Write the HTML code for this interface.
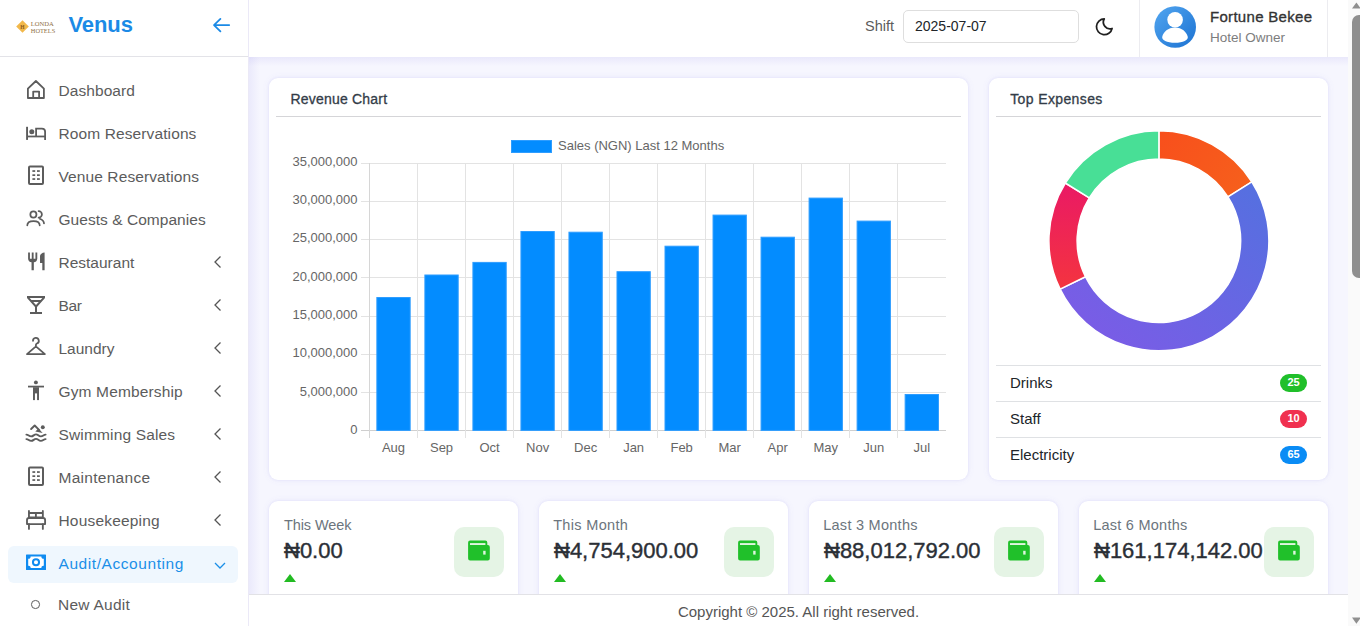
<!DOCTYPE html>
<html><head><meta charset="utf-8">
<style>
*{box-sizing:border-box;margin:0;padding:0}
html,body{width:1360px;height:626px;overflow:hidden}
body{position:relative;background:#f6f6fe;font-family:"Liberation Sans",sans-serif;color:#333}
.a{position:absolute;white-space:nowrap;line-height:1}
svg.a{overflow:visible}
.card{position:absolute;background:#fff;border-radius:9px;box-shadow:0 0 3px rgba(95,85,220,.13),0 0 9px rgba(110,100,230,.06)}
</style></head>
<body>

<div class="a" style="left:0;top:0;width:248px;height:626px;background:#fff"></div>
<svg class="a" style="left:15px;top:19px" width="42" height="16" viewBox="0 0 42 16">
<path d="M7.5 1.2 L13.8 7.5 L7.5 13.8 L1.2 7.5Z" fill="#f2b84b"/>
<text x="7.5" y="9.8" font-size="5.5" text-anchor="middle" fill="#8a5a1a" font-family="Liberation Serif" font-weight="bold">H</text>
<text x="15.8" y="7.4" font-size="6.8" fill="#8f6f45" font-family="Liberation Serif" textLength="23" lengthAdjust="spacingAndGlyphs">LONDA</text>
<text x="15.8" y="13.6" font-size="6.8" fill="#8f6f45" font-family="Liberation Serif" textLength="24.4" lengthAdjust="spacingAndGlyphs">HOTELS</text>
</svg>
<div class="a" style="left:68.5px;top:14.18px;font-size:22px;font-weight:bold;color:#1b8ae6;letter-spacing:-0.1px">Venus</div>
<svg class="a" style="left:210px;top:15px" width="24" height="22" viewBox="0 0 24 22"><path d="M4 10.1H19.2M4 10.1L10.4 3.9M4 10.1L10.4 16.3" stroke="#1b8ae6" stroke-width="1.8" fill="none" stroke-linecap="round" stroke-linejoin="round"/></svg>
<div class="a" style="left:0;top:56px;width:248px;height:1px;background:#e3e3e8"></div>
<svg class="a" style="left:24px;top:77.9px" width="24" height="24" viewBox="0 0 24 24"><path d="M3.9 20V10.6L11.9 3L19.9 10.6V20Z M9.2 20V13.6H15.1V20" fill="none" stroke="#5c5c5c" stroke-width="1.8" stroke-linejoin="round"/></svg>
<div class="a" style="left:58.5px;top:83.08px;font-size:15.5px;color:#5c5c5c;letter-spacing:0.07px">Dashboard</div>
<svg class="a" style="left:24px;top:120.9px" width="24" height="24" viewBox="0 0 24 24"><g fill="#5c5c5c"><rect x="2.1" y="5.8" width="1.9" height="13.1"/><circle cx="7.8" cy="10.8" r="2.5"/><rect x="4" y="14.6" width="17" height="1.75"/></g><path d="M12.1 15V7.6H17.9A3.2 3.2 0 0 1 21.1 10.8V18.9" fill="none" stroke="#5c5c5c" stroke-width="1.8"/></svg>
<div class="a" style="left:58.5px;top:126.08px;font-size:15.5px;color:#5c5c5c;letter-spacing:0.11px">Room Reservations</div>
<svg class="a" style="left:24px;top:163.9px" width="24" height="24" viewBox="0 0 24 24"><rect x="5" y="2.4" width="14" height="17.6" rx="1" fill="none" stroke="#5c5c5c" stroke-width="2"/><g fill="#5c5c5c"><rect x="8.4" y="6.2" width="2.8" height="1.7"/><rect x="13" y="6.2" width="2.8" height="1.7"/><rect x="8.4" y="10.3" width="2.8" height="1.7"/><rect x="13" y="10.3" width="2.8" height="1.7"/><rect x="8.4" y="14.2" width="2.8" height="1.7"/><rect x="13" y="14.2" width="2.8" height="1.7"/></g></svg>
<div class="a" style="left:58.5px;top:169.08px;font-size:15.5px;color:#5c5c5c;letter-spacing:0.1px">Venue Reservations</div>
<svg class="a" style="left:24px;top:206.9px" width="24" height="24" viewBox="0 0 24 24"><g fill="none" stroke="#5c5c5c" stroke-width="1.75" stroke-linecap="round"><circle cx="9.4" cy="7.5" r="3.05"/><path d="M3.3 18.3C3.3 15.6 6 14 9.5 14C13 14 15.7 15.6 15.7 18.3"/><path d="M14.6 4.1A3.3 3.3 0 0 1 14.6 10.7"/><path d="M15.8 11.8C18.2 12.7 19.9 14.3 20 16.4"/></g></svg>
<div class="a" style="left:58.5px;top:212.08px;font-size:15.5px;color:#5c5c5c;letter-spacing:0.04px">Guests &amp; Companies</div>
<svg class="a" style="left:24px;top:249.9px" width="24" height="24" viewBox="0 0 24 24"><path fill="#5c5c5c" transform="translate(4.1 2.5) scale(0.917 0.885) translate(-3 -2)" d="M11 9H9V2H7v7H5V2H3v7c0 2.12 1.66 3.84 3.75 3.97V22h2.5v-9.03C11.34 12.84 13 11.12 13 9V2h-2v7zm5-3v8h2.5v8H21V2c-2.76 0-5 2.24-5 4z"/></svg>
<div class="a" style="left:58.5px;top:255.08px;font-size:15.5px;color:#5c5c5c;letter-spacing:0px">Restaurant</div>
<svg class="a" style="left:212px;top:254.9px" width="10" height="14" viewBox="0 0 10 14"><path d="M8.5 1.5L3 7L8.5 12.5" fill="none" stroke="#555" stroke-width="1.3"/></svg>
<svg class="a" style="left:24px;top:292.9px" width="24" height="24" viewBox="0 0 24 24"><path fill="#5c5c5c" d="M14.77 9L12 12.11 9.23 9h5.54M21 3H3v2l8 9v5H6v2h12v-2h-5v-5l8-9V3zM7.43 7L5.66 5h12.69l-1.78 2H7.43z"/></svg>
<div class="a" style="left:58.5px;top:298.08px;font-size:15.5px;color:#5c5c5c;letter-spacing:-0.3px">Bar</div>
<svg class="a" style="left:212px;top:297.9px" width="10" height="14" viewBox="0 0 10 14"><path d="M8.5 1.5L3 7L8.5 12.5" fill="none" stroke="#555" stroke-width="1.3"/></svg>
<svg class="a" style="left:24px;top:335.9px" width="24" height="24" viewBox="0 0 24 24"><path d="M9 4.8A2.9 2.9 0 1 1 12.9 7.5C12.2 7.9 11.9 8.4 11.9 9.1V10.4L3 18.1H20.9L11.9 10.4" fill="none" stroke="#5c5c5c" stroke-width="1.8" stroke-linecap="round" stroke-linejoin="round"/></svg>
<div class="a" style="left:58.5px;top:341.08px;font-size:15.5px;color:#5c5c5c;letter-spacing:0px">Laundry</div>
<svg class="a" style="left:212px;top:340.9px" width="10" height="14" viewBox="0 0 10 14"><path d="M8.5 1.5L3 7L8.5 12.5" fill="none" stroke="#555" stroke-width="1.3"/></svg>
<svg class="a" style="left:24px;top:378.9px" width="24" height="24" viewBox="0 0 24 24"><g fill="#5c5c5c"><circle cx="11.9" cy="3.4" r="1.95"/><rect x="4" y="6.7" width="16" height="1.75"/><rect x="9" y="8.2" width="6" height="6.2"/><rect x="9" y="13" width="1.95" height="8.1"/><rect x="13.05" y="13" width="1.95" height="8.1"/></g></svg>
<div class="a" style="left:58.5px;top:384.08px;font-size:15.5px;color:#5c5c5c;letter-spacing:0.14px">Gym Membership</div>
<svg class="a" style="left:212px;top:383.9px" width="10" height="14" viewBox="0 0 10 14"><path d="M8.5 1.5L3 7L8.5 12.5" fill="none" stroke="#555" stroke-width="1.3"/></svg>
<svg class="a" style="left:24px;top:421.9px" width="24" height="24" viewBox="0 0 24 24"><g fill="none" stroke="#5c5c5c" stroke-width="1.9" stroke-linecap="round"><path d="M2.4 12.6C4.5 12.6 5 14.4 7.2 14.4S9.9 12.4 12 12.4S14.5 14.4 16.8 14.4S19.5 12.6 21.6 12.6"/><path d="M2.4 17.1C4.5 17.1 5 18.9 7.2 18.9S9.9 16.9 12 16.9S14.5 18.9 16.8 18.9S19.5 17.1 21.6 17.1"/><path d="M7.1 7L10.7 3.5L15.3 8.1" stroke-linejoin="round"/></g><path fill="#5c5c5c" d="M11.3 9.5L14.4 6.4L18.7 10.9Z"/><circle cx="18.8" cy="5.3" r="1.95" fill="#5c5c5c"/></svg>
<div class="a" style="left:58.5px;top:427.08px;font-size:15.5px;color:#5c5c5c;letter-spacing:0.15px">Swimming Sales</div>
<svg class="a" style="left:212px;top:426.9px" width="10" height="14" viewBox="0 0 10 14"><path d="M8.5 1.5L3 7L8.5 12.5" fill="none" stroke="#555" stroke-width="1.3"/></svg>
<svg class="a" style="left:24px;top:464.9px" width="24" height="24" viewBox="0 0 24 24"><rect x="5" y="2.4" width="14" height="17.6" rx="1" fill="none" stroke="#5c5c5c" stroke-width="2"/><g fill="#5c5c5c"><rect x="8.4" y="6.2" width="2.8" height="1.7"/><rect x="13" y="6.2" width="2.8" height="1.7"/><rect x="8.4" y="10.3" width="2.8" height="1.7"/><rect x="13" y="10.3" width="2.8" height="1.7"/><rect x="8.4" y="14.2" width="2.8" height="1.7"/><rect x="13" y="14.2" width="2.8" height="1.7"/></g></svg>
<div class="a" style="left:58.5px;top:470.08px;font-size:15.5px;color:#5c5c5c;letter-spacing:0.28px">Maintenance</div>
<svg class="a" style="left:212px;top:469.9px" width="10" height="14" viewBox="0 0 10 14"><path d="M8.5 1.5L3 7L8.5 12.5" fill="none" stroke="#555" stroke-width="1.3"/></svg>
<svg class="a" style="left:24px;top:507.9px" width="24" height="24" viewBox="0 0 24 24"><g fill="none" stroke="#5c5c5c" stroke-width="1.85" stroke-linecap="round" stroke-linejoin="round"><path d="M4.95 2.9V10M18.85 2.9V10M4.95 4.95H18.85M4.95 9.5H18.85M11.9 4.95V9.5"/><path d="M3 16.1V12A2 2 0 0 1 5 10H19.1A2 2 0 0 1 21.1 12V16.1Z"/><path d="M4.95 16.1V20.9M18.85 16.1V20.9"/></g></svg>
<div class="a" style="left:58.5px;top:513.08px;font-size:15.5px;color:#5c5c5c;letter-spacing:0.18px">Housekeeping</div>
<svg class="a" style="left:212px;top:512.9px" width="10" height="14" viewBox="0 0 10 14"><path d="M8.5 1.5L3 7L8.5 12.5" fill="none" stroke="#555" stroke-width="1.3"/></svg>
<div class="a" style="left:8px;top:545.5px;width:230px;height:37px;border-radius:6px;background:#eff7fe"></div>
<svg class="a" style="left:24px;top:550.4px" width="24" height="24" viewBox="0 0 24 24"><rect x="2" y="4.5" width="20" height="15.5" rx="0.6" fill="#0f8bf0"/><path fill="#fff" d="M6.6 6.5H17.4a2 2 0 0 0 2.4 2.3V15.7a2 2 0 0 0-2.4 2.3H6.6a2 2 0 0 0-2.4-2.3V8.8a2 2 0 0 0 2.4-2.3Z"/><circle cx="12" cy="12.25" r="3.05" fill="none" stroke="#0f8bf0" stroke-width="2"/></svg>
<div class="a" style="left:58.5px;top:556.08px;font-size:15.5px;color:#1a8fe8;letter-spacing:0.57px">Audit/Accounting</div>
<svg class="a" style="left:211.5px;top:560.2px" width="16" height="12" viewBox="0 0 16 12"><path d="M3 3L8 8L13 3" fill="none" stroke="#1a8fe8" stroke-width="1.3"/></svg>
<div class="a" style="left:31.3px;top:600.2px;width:8.5px;height:8.5px;border-radius:50%;border:1.6px solid #5c5c5c"></div>
<div class="a" style="left:58px;top:596.88px;font-size:15.5px;color:#5c5c5c;letter-spacing:0.25px">New Audit</div>
<div class="a" style="left:249px;top:0;width:1099px;height:57px;background:#fff"></div>
<div class="a" style="left:249px;top:57px;width:1099px;height:9px;background:linear-gradient(rgba(100,90,220,.085),rgba(100,90,220,0))"></div>
<div class="a" style="left:248px;top:57px;width:12px;height:537px;background:linear-gradient(90deg,rgba(100,90,220,.085),rgba(100,90,220,0))"></div>
<div class="a" style="left:248px;top:0;width:1px;height:626px;background:#ebe9f7"></div>
<div class="a" style="left:865px;top:18.53px;font-size:14.5px;color:#5c5c5c;">Shift</div>
<div class="a" style="left:903px;top:10px;width:176px;height:33px;border:1px solid #dedede;border-radius:5px;background:#fff"></div>
<div class="a" style="left:915px;top:19.35px;font-size:14px;color:#212529;">2025-07-07</div>
<svg class="a" style="left:1092.5px;top:16px" width="22" height="22" viewBox="0 0 24 24"><path d="M12.3 3.2a7.2 7.2 0 0 0 8.5 10.4A8.6 8.6 0 1 1 12.3 3.2Z" fill="none" stroke="#1f1f1f" stroke-width="1.9" stroke-linejoin="round"/></svg>
<div class="a" style="left:1139px;top:0;width:1px;height:57px;background:#ececf0"></div>
<div class="a" style="left:1327px;top:0;width:1px;height:57px;background:#ececf0"></div>
<svg class="a" style="left:1154px;top:6px" width="42" height="42" viewBox="0 0 42 42"><defs><linearGradient id="av" x1="0" y1="0" x2="1" y2="1"><stop offset="0" stop-color="#52a6f0"/><stop offset="1" stop-color="#1c72d2"/></linearGradient></defs>
<circle cx="21.2" cy="21" r="20.8" fill="url(#av)"/><circle cx="21.1" cy="13.8" r="7.8" fill="#fff"/><path d="M8.3 30.5C9.5 26 14 21.8 21 21.6C28 21.8 32.5 26 33.7 30.5C34.8 34 29 36.8 21 36.8C13 36.8 7.2 34 8.3 30.5Z" fill="#fff"/></svg>
<div class="a" style="left:1210px;top:9.10px;font-size:15px;-webkit-text-stroke:0.33px #333;color:#333;letter-spacing:0.3px">Fortune Bekee</div>
<div class="a" style="left:1210px;top:30.97px;font-size:13.5px;color:#7d7d7d;">Hotel Owner</div>
<div class="card" style="left:269px;top:78px;width:699px;height:402px"></div>
<div class="a" style="left:290.5px;top:91.85px;font-size:14px;-webkit-text-stroke:0.31px #333c48;color:#333c48;letter-spacing:0.2px">Revenue Chart</div>
<div class="a" style="left:276px;top:116px;width:685px;height:1px;background:#d5d5d8"></div>
<svg class="a" style="left:0;top:0" width="1360" height="626" viewBox="0 0 1360 626">
<line x1="361" y1="430.5" x2="946" y2="430.5" stroke="#cfcfcf" stroke-width="1"/>
<line x1="361" y1="392.5" x2="946" y2="392.5" stroke="#e3e3e3" stroke-width="1"/>
<line x1="361" y1="354.5" x2="946" y2="354.5" stroke="#e3e3e3" stroke-width="1"/>
<line x1="361" y1="316.5" x2="946" y2="316.5" stroke="#e3e3e3" stroke-width="1"/>
<line x1="361" y1="277.5" x2="946" y2="277.5" stroke="#e3e3e3" stroke-width="1"/>
<line x1="361" y1="239.5" x2="946" y2="239.5" stroke="#e3e3e3" stroke-width="1"/>
<line x1="361" y1="201.5" x2="946" y2="201.5" stroke="#e3e3e3" stroke-width="1"/>
<line x1="361" y1="163.5" x2="946" y2="163.5" stroke="#e3e3e3" stroke-width="1"/>
<line x1="369.5" y1="163" x2="369.5" y2="438" stroke="#d6d6d6" stroke-width="1"/>
<line x1="417.5" y1="163" x2="417.5" y2="438" stroke="#e3e3e3" stroke-width="1"/>
<line x1="465.5" y1="163" x2="465.5" y2="438" stroke="#e3e3e3" stroke-width="1"/>
<line x1="513.5" y1="163" x2="513.5" y2="438" stroke="#e3e3e3" stroke-width="1"/>
<line x1="561.5" y1="163" x2="561.5" y2="438" stroke="#e3e3e3" stroke-width="1"/>
<line x1="609.5" y1="163" x2="609.5" y2="438" stroke="#e3e3e3" stroke-width="1"/>
<line x1="657.5" y1="163" x2="657.5" y2="438" stroke="#e3e3e3" stroke-width="1"/>
<line x1="705.5" y1="163" x2="705.5" y2="438" stroke="#e3e3e3" stroke-width="1"/>
<line x1="753.5" y1="163" x2="753.5" y2="438" stroke="#e3e3e3" stroke-width="1"/>
<line x1="801.5" y1="163" x2="801.5" y2="438" stroke="#e3e3e3" stroke-width="1"/>
<line x1="849.5" y1="163" x2="849.5" y2="438" stroke="#e3e3e3" stroke-width="1"/>
<line x1="897.5" y1="163" x2="897.5" y2="438" stroke="#e3e3e3" stroke-width="1"/>
<line x1="430.5" y1="0" x2="0" y2="0" stroke="none"/>
<rect x="376.86" y="297.50" width="33.30" height="132.90" fill="#038cff" stroke="#2e9dff" stroke-width="1"/>
<text x="393.51" y="452" font-size="13" fill="#666" text-anchor="middle" font-family="Liberation Sans">Aug</text>
<rect x="424.89" y="275.00" width="33.30" height="155.40" fill="#038cff" stroke="#2e9dff" stroke-width="1"/>
<text x="441.54" y="452" font-size="13" fill="#666" text-anchor="middle" font-family="Liberation Sans">Sep</text>
<rect x="472.91" y="262.40" width="33.30" height="168.00" fill="#038cff" stroke="#2e9dff" stroke-width="1"/>
<text x="489.56" y="452" font-size="13" fill="#666" text-anchor="middle" font-family="Liberation Sans">Oct</text>
<rect x="520.94" y="231.50" width="33.30" height="198.90" fill="#038cff" stroke="#2e9dff" stroke-width="1"/>
<text x="537.59" y="452" font-size="13" fill="#666" text-anchor="middle" font-family="Liberation Sans">Nov</text>
<rect x="568.96" y="232.20" width="33.30" height="198.20" fill="#038cff" stroke="#2e9dff" stroke-width="1"/>
<text x="585.61" y="452" font-size="13" fill="#666" text-anchor="middle" font-family="Liberation Sans">Dec</text>
<rect x="616.99" y="271.70" width="33.30" height="158.70" fill="#038cff" stroke="#2e9dff" stroke-width="1"/>
<text x="633.64" y="452" font-size="13" fill="#666" text-anchor="middle" font-family="Liberation Sans">Jan</text>
<rect x="665.01" y="246.20" width="33.30" height="184.20" fill="#038cff" stroke="#2e9dff" stroke-width="1"/>
<text x="681.66" y="452" font-size="13" fill="#666" text-anchor="middle" font-family="Liberation Sans">Feb</text>
<rect x="713.04" y="215.10" width="33.30" height="215.30" fill="#038cff" stroke="#2e9dff" stroke-width="1"/>
<text x="729.69" y="452" font-size="13" fill="#666" text-anchor="middle" font-family="Liberation Sans">Mar</text>
<rect x="761.06" y="237.20" width="33.30" height="193.20" fill="#038cff" stroke="#2e9dff" stroke-width="1"/>
<text x="777.71" y="452" font-size="13" fill="#666" text-anchor="middle" font-family="Liberation Sans">Apr</text>
<rect x="809.09" y="198.10" width="33.30" height="232.30" fill="#038cff" stroke="#2e9dff" stroke-width="1"/>
<text x="825.74" y="452" font-size="13" fill="#666" text-anchor="middle" font-family="Liberation Sans">May</text>
<rect x="857.11" y="221.10" width="33.30" height="209.30" fill="#038cff" stroke="#2e9dff" stroke-width="1"/>
<text x="873.76" y="452" font-size="13" fill="#666" text-anchor="middle" font-family="Liberation Sans">Jun</text>
<rect x="905.14" y="394.50" width="33.30" height="35.90" fill="#038cff" stroke="#2e9dff" stroke-width="1"/>
<text x="921.79" y="452" font-size="13" fill="#666" text-anchor="middle" font-family="Liberation Sans">Jul</text>
<text x="357.5" y="434.10" font-size="13" fill="#666" text-anchor="end" font-family="Liberation Sans">0</text>
<text x="357.5" y="395.73" font-size="13" fill="#666" text-anchor="end" font-family="Liberation Sans">5,000,000</text>
<text x="357.5" y="357.36" font-size="13" fill="#666" text-anchor="end" font-family="Liberation Sans">10,000,000</text>
<text x="357.5" y="318.99" font-size="13" fill="#666" text-anchor="end" font-family="Liberation Sans">15,000,000</text>
<text x="357.5" y="280.61" font-size="13" fill="#666" text-anchor="end" font-family="Liberation Sans">20,000,000</text>
<text x="357.5" y="242.24" font-size="13" fill="#666" text-anchor="end" font-family="Liberation Sans">25,000,000</text>
<text x="357.5" y="203.87" font-size="13" fill="#666" text-anchor="end" font-family="Liberation Sans">30,000,000</text>
<text x="357.5" y="165.50" font-size="13" fill="#666" text-anchor="end" font-family="Liberation Sans">35,000,000</text>
<rect x="511.5" y="140.5" width="40" height="12" fill="#038cff" stroke="#2e9dff" stroke-width="1"/>
<text x="558" y="150" font-size="13" fill="#666" font-family="Liberation Sans">Sales (NGN) Last 12 Months</text>
</svg>
<div class="card" style="left:989px;top:78px;width:339px;height:402px"></div>
<div class="a" style="left:1010.2px;top:91.85px;font-size:14px;-webkit-text-stroke:0.31px #333c48;color:#333c48;letter-spacing:0.38px">Top Expenses</div>
<div class="a" style="left:996px;top:116px;width:325px;height:1px;background:#d5d5d8"></div>
<svg class="a" style="left:0;top:0" width="1360" height="626" viewBox="0 0 1360 626"><defs>
<linearGradient id="gp" gradientUnits="userSpaceOnUse" x1="1250" y1="180" x2="1110" y2="350"><stop offset="0" stop-color="#5570e0"/><stop offset="1" stop-color="#7a5ce6"/></linearGradient>
<linearGradient id="gr" gradientUnits="userSpaceOnUse" x1="1060" y1="185" x2="1060" y2="290"><stop offset="0" stop-color="#ea1a64"/><stop offset="1" stop-color="#f4343f"/></linearGradient>
<linearGradient id="go" gradientUnits="userSpaceOnUse" x1="1160" y1="130" x2="1250" y2="190"><stop offset="0" stop-color="#f84f1c"/><stop offset="1" stop-color="#f6601c"/></linearGradient>
</defs>
<path d="M1158.90 130.80A110 110 0 0 1 1251.78 181.86L1227.97 196.97A81.8 81.8 0 0 0 1158.90 159.00Z" fill="url(#go)" stroke="#fff" stroke-width="1.5" stroke-linejoin="round"/>
<path d="M1251.78 181.86A110 110 0 1 1 1060.12 289.19L1085.44 276.79A81.8 81.8 0 1 0 1227.97 196.97Z" fill="url(#gp)" stroke="#fff" stroke-width="1.5" stroke-linejoin="round"/>
<path d="M1060.12 289.19A110 110 0 0 1 1065.31 183.00L1089.30 197.82A81.8 81.8 0 0 0 1085.44 276.79Z" fill="url(#gr)" stroke="#fff" stroke-width="1.5" stroke-linejoin="round"/>
<path d="M1065.31 183.00A110 110 0 0 1 1158.90 130.80L1158.90 159.00A81.8 81.8 0 0 0 1089.30 197.82Z" fill="#48df96" stroke="#fff" stroke-width="1.5" stroke-linejoin="round"/>
</svg>
<div class="a" style="left:996px;top:365.0px;width:325px;height:1px;background:#dfe1e4"></div>
<div class="a" style="left:996px;top:401.0px;width:325px;height:1px;background:#dfe1e4"></div>
<div class="a" style="left:996px;top:437.0px;width:325px;height:1px;background:#dfe1e4"></div>
<div class="a" style="left:1010px;top:375.30px;font-size:15px;color:#212529;">Drinks</div>
<div class="a" style="left:1280px;top:373.8px;width:27px;height:18px;border-radius:9px;background:#20bf2a;color:#fff;font-size:11px;font-weight:bold;text-align:center;line-height:16.5px">25</div>
<div class="a" style="left:1010px;top:411.30px;font-size:15px;color:#212529;">Staff</div>
<div class="a" style="left:1280px;top:409.8px;width:27px;height:18px;border-radius:9px;background:#f0304f;color:#fff;font-size:11px;font-weight:bold;text-align:center;line-height:16.5px">10</div>
<div class="a" style="left:1010px;top:447.30px;font-size:15px;color:#212529;">Electricity</div>
<div class="a" style="left:1280px;top:445.8px;width:27px;height:18px;border-radius:9px;background:#0a8cf5;color:#fff;font-size:11px;font-weight:bold;text-align:center;line-height:16.5px">65</div>
<div class="card" style="left:269px;top:501px;width:249px;height:140px"></div>
<div class="a" style="left:284px;top:518.13px;font-size:14.5px;color:#6c757d;letter-spacing:-0.1px">This Week</div>
<div class="a" style="left:284px;top:540.38px;font-size:22px;-webkit-text-stroke:0.40px #2b2f36;color:#2b2f36;">&#8358;0.00</div>
<div class="a" style="left:284px;top:574px;width:0;height:0;border-left:6px solid transparent;border-right:6px solid transparent;border-bottom:8px solid #22bb22"></div>
<div class="a" style="left:454px;top:527px;width:50px;height:50px;border-radius:10px;background:#e5f4e5"></div>
<svg class="a" style="left:468px;top:540px" width="22" height="21" viewBox="0 0 22 21"><path d="M0.1 2.6Q0.1 0.6 2.1 0.6H17.3Q19.3 0.6 19.3 2.6V5H19.8Q21.8 5 21.8 7V18.4Q21.8 20.4 19.8 20.4H2.1Q0.1 20.4 0.1 18.4Z" fill="#20c02a"/><rect x="2" y="3.1" width="15.4" height="1.9" fill="#dff5df"/><rect x="15.2" y="10.8" width="2.4" height="3.8" fill="#dff5df"/></svg>
<div class="card" style="left:539px;top:501px;width:249px;height:140px"></div>
<div class="a" style="left:553.2px;top:518.13px;font-size:14.5px;color:#6c757d;letter-spacing:0.33px">This Month</div>
<div class="a" style="left:554px;top:540.38px;font-size:22px;-webkit-text-stroke:0.40px #2b2f36;color:#2b2f36;">&#8358;4,754,900.00</div>
<div class="a" style="left:554px;top:574px;width:0;height:0;border-left:6px solid transparent;border-right:6px solid transparent;border-bottom:8px solid #22bb22"></div>
<div class="a" style="left:724px;top:527px;width:50px;height:50px;border-radius:10px;background:#e5f4e5"></div>
<svg class="a" style="left:738px;top:540px" width="22" height="21" viewBox="0 0 22 21"><path d="M0.1 2.6Q0.1 0.6 2.1 0.6H17.3Q19.3 0.6 19.3 2.6V5H19.8Q21.8 5 21.8 7V18.4Q21.8 20.4 19.8 20.4H2.1Q0.1 20.4 0.1 18.4Z" fill="#20c02a"/><rect x="2" y="3.1" width="15.4" height="1.9" fill="#dff5df"/><rect x="15.2" y="10.8" width="2.4" height="3.8" fill="#dff5df"/></svg>
<div class="card" style="left:809px;top:501px;width:249px;height:140px"></div>
<div class="a" style="left:823.2px;top:518.13px;font-size:14.5px;color:#6c757d;letter-spacing:0.27px">Last 3 Months</div>
<div class="a" style="left:824px;top:540.38px;font-size:22px;-webkit-text-stroke:0.40px #2b2f36;color:#2b2f36;">&#8358;88,012,792.00</div>
<div class="a" style="left:824px;top:574px;width:0;height:0;border-left:6px solid transparent;border-right:6px solid transparent;border-bottom:8px solid #22bb22"></div>
<div class="a" style="left:994px;top:527px;width:50px;height:50px;border-radius:10px;background:#e5f4e5"></div>
<svg class="a" style="left:1008px;top:540px" width="22" height="21" viewBox="0 0 22 21"><path d="M0.1 2.6Q0.1 0.6 2.1 0.6H17.3Q19.3 0.6 19.3 2.6V5H19.8Q21.8 5 21.8 7V18.4Q21.8 20.4 19.8 20.4H2.1Q0.1 20.4 0.1 18.4Z" fill="#20c02a"/><rect x="2" y="3.1" width="15.4" height="1.9" fill="#dff5df"/><rect x="15.2" y="10.8" width="2.4" height="3.8" fill="#dff5df"/></svg>
<div class="card" style="left:1079px;top:501px;width:249px;height:140px"></div>
<div class="a" style="left:1093.2px;top:518.13px;font-size:14.5px;color:#6c757d;letter-spacing:0.25px">Last 6 Months</div>
<div class="a" style="left:1094px;top:540.38px;font-size:22px;-webkit-text-stroke:0.40px #2b2f36;color:#2b2f36;">&#8358;161,174,142.00</div>
<div class="a" style="left:1094px;top:574px;width:0;height:0;border-left:6px solid transparent;border-right:6px solid transparent;border-bottom:8px solid #22bb22"></div>
<div class="a" style="left:1264px;top:527px;width:50px;height:50px;border-radius:10px;background:#e5f4e5"></div>
<svg class="a" style="left:1278px;top:540px" width="22" height="21" viewBox="0 0 22 21"><path d="M0.1 2.6Q0.1 0.6 2.1 0.6H17.3Q19.3 0.6 19.3 2.6V5H19.8Q21.8 5 21.8 7V18.4Q21.8 20.4 19.8 20.4H2.1Q0.1 20.4 0.1 18.4Z" fill="#20c02a"/><rect x="2" y="3.1" width="15.4" height="1.9" fill="#dff5df"/><rect x="15.2" y="10.8" width="2.4" height="3.8" fill="#dff5df"/></svg>
<div class="a" style="left:249px;top:594px;width:1099px;height:32px;background:#fff;border-top:1px solid #e2e2e6"></div>
<div class="a" style="left:249px;top:603.8px;width:1099px;text-align:center;font-size:15px;color:#555;line-height:15px">Copyright © 2025. All right reserved.</div>
<div class="a" style="left:1348px;top:0;width:12px;height:626px;background:#fafafa"></div>
<div class="a" style="left:1352px;top:15px;width:14px;height:263px;border-radius:7px;background:#8f8f8f"></div>
<svg class="a" style="left:1348px;top:0" width="12" height="626" viewBox="0 0 12 626"><path d="M4 8.6L8.4 2.4L12.8 8.6Z" fill="#8f8f8f"/><path d="M4 617.5L8.4 623.7L12.8 617.5Z" fill="#8f8f8f"/></svg>
</body></html>
